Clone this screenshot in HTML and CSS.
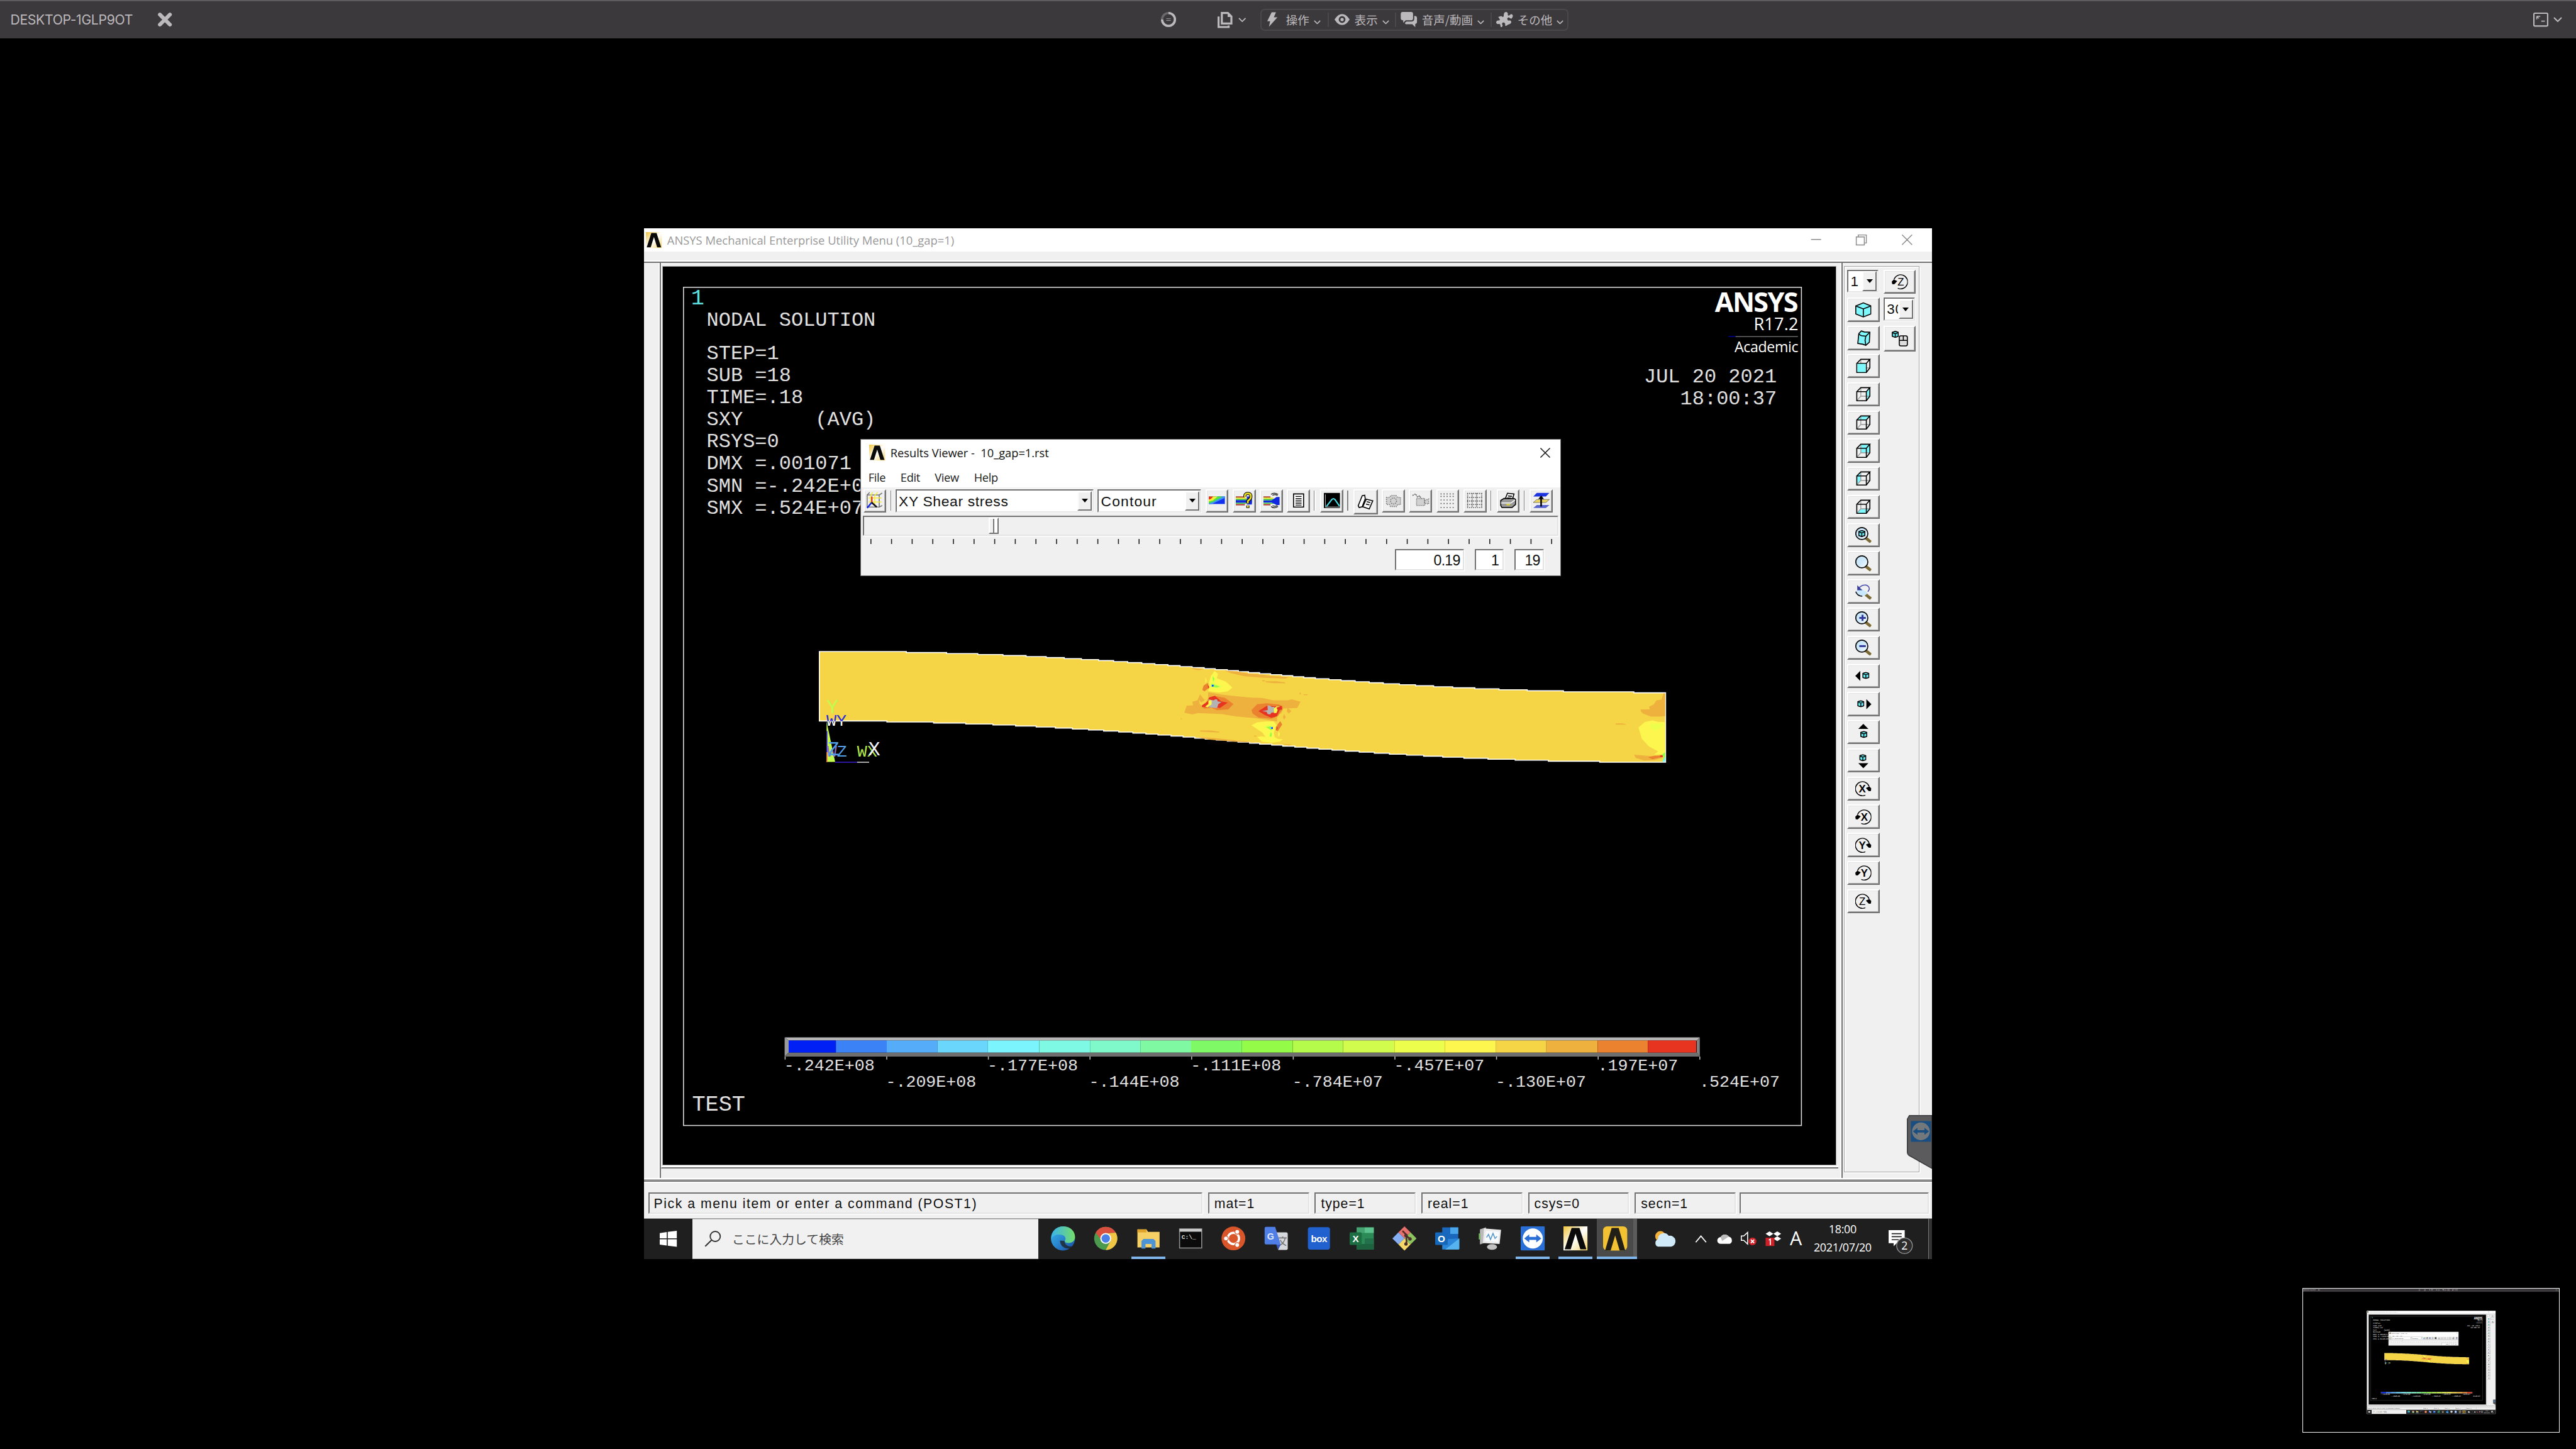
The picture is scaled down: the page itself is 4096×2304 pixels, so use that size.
FILE: index.html
```html
<!DOCTYPE html>
<html lang="ja">
<head>
<meta charset="utf-8">
<title>DESKTOP-1GLP9OT</title>
<link rel="stylesheet" href="styles.css">
</head>
<body>
<svg class="sprite" aria-hidden="true">
  <defs>
    <linearGradient id="g-edge" x1="0" y1="0" x2="1" y2="1"><stop offset="0" stop-color="#35b8e8"/><stop offset=".5" stop-color="#2a86d0"/><stop offset="1" stop-color="#17489c"/></linearGradient>
    <linearGradient id="g-edge2" x1="0" y1="0" x2="1" y2="0"><stop offset="0" stop-color="#3cb4ea"/><stop offset="1" stop-color="#74dd6a"/></linearGradient>
    <linearGradient id="g-lens" x1="0" y1="0" x2="1" y2="1"><stop offset="0" stop-color="#c0e2f8"/><stop offset=".5" stop-color="#cfeafc"/><stop offset="1" stop-color="#fff"/></linearGradient>
    <linearGradient id="g-gold" x1="0" y1="0" x2="1" y2="1"><stop offset="0" stop-color="#f0c53c"/><stop offset=".5" stop-color="#fff"/><stop offset="1" stop-color="#f3d264"/></linearGradient>
    <linearGradient id="g-wy" gradientUnits="userSpaceOnUse" x1="0" y1="482" x2="0" y2="495"><stop offset=".58" stop-color="#2b2bd8"/><stop offset=".59" stop-color="#fff"/></linearGradient>
  </defs>
  <symbol id="ansys" viewBox="0 0 16 16"><rect width="16" height="16" fill="url(#g-gold)"/><path d="M.8 15.2 5.4 1h5.2l4.6 14.2h-4L8 4.8 4.8 15.2z" fill="#0a0a0a"/></symbol>
  <symbol id="cube" viewBox="0 0 16 16"><path d="M.5 4 8 1l7.500 3v8L8 15 .5 12z" fill="#7ef7fd" stroke="#000"/><path d="M.5 4 8 7l7.500-3M8 7v8" fill="none" stroke="#000"/></symbol>
  <symbol id="cube-tilt" viewBox="0 0 16 16"><path d="M3.500 3.500 6 .8l3 1 5.500.2-.5 10-3.500 3-3-1-5-.8z" fill="#7ef7fd" stroke="#000"/><path d="M3.500 4 6 5.500l4.500.5L14 2.500M10.500 6l-.8 4 .8 5" fill="none" stroke="#000"/></symbol>
  <symbol id="wire" viewBox="0 0 16 16"><path d="M5.500 1.500v8.500h9M5.500 10 1.500 14.500" fill="none" stroke="#999" stroke-width=".8"/><path d="M1.500 5.500h9.500v9H1.500zM1.500 5.500l4-4h9l-3.500 4M14.500 1.500V10L11 14.500" fill="none" stroke="#000"/></symbol>
  <symbol id="lens" viewBox="0 0 16 16"><path d="M10 10.500 15.500 15" stroke="#7d6b35" stroke-width="3"/><circle cx="6.500" cy="6.500" r="6" fill="url(#g-lens)" stroke="#111" stroke-width="1.100"/></symbol>
  <symbol id="cubelet" viewBox="0 0 7 7"><path d="M.5 1.500 3.500.5l3 1v4l-3 1-3-1z" fill="#5fe9f0" stroke="#000"/><path d="M1 2.200l2.500.6 2.500-.6M3.500 3v3.500" stroke="#000" stroke-width=".9" fill="none"/></symbol>
  <symbol id="cw" viewBox="0 0 16 16"><path d="M10 14.600A7 7 0 1 1 13.800 6" fill="none" stroke="#000" stroke-width=".9"/><path d="M10.500 7.500 14 6l2 2-.5 2.500-2 .2z"/></symbol>
  <symbol id="ccw" viewBox="0 0 16 16"><path d="M6 14.600A7 7 0 1 0 2.200 6" fill="none" stroke="#000" stroke-width=".9"/><path d="M5.500 7.500 2 6 0 8l.5 2.500 2 .2z"/></symbol>
  <symbol id="chev" viewBox="0 0 14 8"><path d="M1 1l6 6 6-6" fill="none" stroke="currentColor" stroke-width="2"/></symbol>
  <symbol id="tv" viewBox="0 0 24 24"><rect width="24" height="24" rx="1" fill="#2a6fd6"/><circle cx="12" cy="12" r="10" fill="#fff"/><path d="M3.500 12l5-4v2.500h7V8l5 4-5 4v-2.500h-7V16z" fill="#2a6fd6"/></symbol>
</svg>

<div class="session">
  <header class="topbar">
    <span class="host">DESKTOP-1GLP9OT</span>
    <svg class="host-close" viewBox="0 0 28 28"><path d="M4 4l20 20M24 4 4 24" stroke="currentColor" stroke-width="7.500" stroke-linecap="round"/></svg>
    <div class="center">
      <svg class="spin" viewBox="0 0 30 30"><circle cx="15" cy="15" r="12.800" fill="none" stroke="#6b686b" stroke-width="4.500"/><path d="M15 2.200A12.800 12.800 0 1 1 2.200 15" fill="none" stroke="currentColor" stroke-width="4.500"/><path d="M10.500 13.500h9M10.500 17h9" stroke="currentColor" stroke-width="1"/></svg>
      <svg class="doc" viewBox="0 0 30 32"><path d="M8.500 2h12l7 7v14h-19z" fill="none" stroke="currentColor" stroke-width="4"/><path d="M20 1v9h8z" fill="currentColor"/><path d="M2 9v21h20v-3" fill="none" stroke="currentColor" stroke-width="4"/></svg>
      <svg class="chev chev-doc"><use href="#chev"/></svg>
      <nav class="menu">
        <div class="mi m1"><svg class="ic" viewBox="0 0 22 30"><path d="M9 0h9l-4.500 10.500H21L3.500 30 6 18.500H0z" fill="currentColor"/></svg><span>操作</span><svg class="chev"><use href="#chev"/></svg></div>
        <div class="mi m2"><svg class="ic" viewBox="0 0 32 24"><path d="M0 12C6 3 10 .5 16 .5S26 3 32 12c-6 9-10 11.500-16 11.500S6 21 0 12z" fill="currentColor"/><circle cx="16" cy="12" r="7.200" fill="#3c393c"/><circle cx="16" cy="12" r="3.500" fill="currentColor"/></svg><span>表示</span><svg class="chev"><use href="#chev"/></svg></div>
        <div class="mi m3"><svg class="ic" viewBox="0 0 33 32"><path d="M4 0h17q4 0 4 4v9q0 4-4 4H10l-5 5v-5.200Q0 17 0 13V4q0-4 4-4z" fill="currentColor"/><path d="M27.500 8Q33 8 33 12v8q0 4-3.500 4v7l-6-6H12q-3.500 0-3.500-3l3-2.500h10q6 0 6-6z" fill="currentColor"/></svg><span>音声/動画</span><svg class="chev"><use href="#chev"/></svg></div>
        <div class="mi m4"><svg class="ic" viewBox="0 0 33 30"><path d="M4 10l6-2 3 2q3-1 2-3 0-7 5-7 4 1 3 5 0 3 3 2l4-3q4 2 3 5l-2 4q-4 1-5-2-4-1-4 3 1 4 4 3 4-1 4 4-1 3-6 4l-5 3q-2-1-1-4-1-4-4-3-3 1-2 4 2 3-1 5H9l-1-5q-1-2-4-1-4 0-4-4 1-4 5-3 3 0 2-3z" fill="currentColor"/></svg><span>その他</span><svg class="chev"><use href="#chev"/></svg></div>
      </nav>
    </div>
    <svg class="winmode" viewBox="0 0 30 28"><rect x="1.300" y="1.300" width="27.400" height="25.400" rx="2" fill="none" stroke="currentColor" stroke-width="2.600"/><path d="M7 7.500h7M7 7.500v6M7 7.500l4 4M16 17h7" fill="none" stroke="currentColor" stroke-width="2"/></svg>
    <svg class="chev chev-end"><use href="#chev"/></svg>
  </header>

  <main class="stage">
    <div class="desktop">
      <div class="titlebar">
        <svg class="app-icon"><use href="#ansys"/></svg>
        <span class="app-title">ANSYS Mechanical Enterprise Utility Menu (10_gap=1)</span>
        <svg class="winbtns" viewBox="0 0 104 12"><path d="M1 5.500h10M46 3h8v8h-8zM48 3V1h8v8h-2M91.500.800l10 10M101.500.800l-10 10" fill="none" stroke="#8a8a8a" stroke-width=".9"/></svg>
      </div>
      <div class="strip"></div>
      <div class="work">
        <div class="gutter"></div>
        <div class="mid">
          <div class="view">
            <svg class="plot" viewBox="19 38 1166 892">
              <rect x="39.500" y="58.500" width="1111" height="833" fill="none" stroke="#d8d8d8"/>
              <text x="47" y="75.600" class="t22 cyan">1</text>
              <g class="t20">
                <text x="62.500" y="96.600">NODAL SOLUTION</text>
                <text x="62.500" y="129.800">STEP=1</text>
                <text x="62.500" y="151.800">SUB =18</text>
                <text x="62.500" y="173.700">TIME=.18</text>
                <text x="62.500" y="195.600">SXY      (AVG)</text>
                <text x="62.500" y="217.600">RSYS=0</text>
                <text x="62.500" y="239.500">DMX =.001071</text>
                <text x="62.500" y="261.700">SMN =-.242E+08</text>
                <text x="62.500" y="283.600">SMX =.524E+07</text>
                <text x="994" y="153">JUL 20 2021</text>
                <text x="1030" y="175">18:00:37</text>
              </g>
              <g class="brand">
                <text x="1064.500" y="82.700" class="b1" textLength="83">ANSYS</text>
                <text x="1103" y="101.300" class="b2" textLength="44.500">R17.2</text>
                <path d="M1078 107.500h7" stroke="#00008c"/><path d="M1085 107.500h62" stroke="#666"/>
                <text x="1084" y="123.200" class="b3" textLength="63.500">Academic</text>
              </g>

              <path d="M174.500 420.500H261v1H301v1H332v1H357v1H380v1H400v1H418v1H435v1H452v1H467v1H481v1H495v1H508v1H521v1H533v1H545v1H557v1H568v1H580v1H591v1H601v1H612v1H623v1H634v1H645v1H656v1H667.500v1H681v1H693v1H707v1H721v1H735v1H751v1H767v1H785v1H804v1H826v1H850v1H878v1H914v1H984v1H1015.500V530.500H950v-1H899v-1H866v-1H839v-1H815v-1H794v-1H775v-1H758v-1H741v-1H726v-1H711v-1H697v-1H684v-1H671v-1H659v-1H647v-1H635v-1H624v-1H612v-1H602v-1H590.500v-1H580v-1H569v-1H558v-1H547.500v-1H536v-1H524v-1H511v-1H499v-1H486v-1H472v-1H457v-1H442v-1H426v-1H409v-1H390v-1H369.500v-1H347v-1H320v-1H288v-1H241.600v-1H174.500z" fill="#f5d446" stroke="#fff"/>
              <!-- contour bands around the two holes -->
              <g transform="translate(160 408) scale(.31888 .16667)">
                <g fill="#efb13e">
                  <path d="M1308 188l42 6 33 12 40 6 30 8 32 4 25 3-12 9-68-4-60-10-40-18z"/>
                  <path d="M1202 172l43 7-17 8-15-6zM1426 246h8v6h-8zM1436 252h34l27 7v5l-35-1-26-5zM1172 472l4 6-4 4zM1542 322h4v8h-4zM1555 330h12v5h-12zM1232 546h34l26 7v5l-34-3-26-3z"/>
                  <path d="M1257 318L1300 332 1340 340 1390 350 1425 352 1460 366 1505 366 1518 360 1545 374 1535 412 1492 414 1486 440 1472 458 1472 492 1440 482 1400 472 1345 462 1300 448 1225 442 1208 450 1183 440 1190 398 1210 396 1208 374 1224 366 1232 330 1245 362 1257 358z"/>
                  <path d="M1505 412l12 18-9 14-6-14zM1494 448l5 18-5 16-4-16zM1215 584l65 8 60 12 66 14-66-6-80-12zM1485 624l36 6-12 6zM1400 575l10 4-8 4z"/>
                </g>
                <path d="M1228 362l8 18 14-20 7 2v20l-16 22-10-16z" fill="#f5d446"/>
                <g fill="#eb822f">
                  <path d="M1262 345l18-5 30 12 26 36-16 32-35 5-18-14-22 4-8-16 10-12 8-20zM1392 425l18-36 30-6 38 8 12 10-2 20-14 40-20 14-40-6-18-24zM1256 262l4 28-14 22-7-8 4-26zM1482 490l6 20-14 40-6-6 6-36z"/>
                </g>
                <path d="M1260 350l18-12 20 34 20 8-24 32-24-6h-32v-10l18-24zM1414 430l26-32 32 4 14-2 2 20-8 4-8 34-6 6-12 6-20-16zM1256 274l5 14-4 8zM1470 518l4 14-4 12z" fill="#e63420"/>
                <path d="M1255 358l12 6 8 2 4-6h6l2 12 12 4-10 12-4 24-26-4 8-22-4-18zM1442 396l8 2 6 8 8-2-2 34-8 2-3 10-8-2-4-14-14-4 18-6z" fill="#b3b3b3"/>
                <path d="M1258 366h10v24l-12 18-8-6 10-14zM1482 402l-12 8 4 14-4 18h-8v-28l8-12z" fill="#fdf64e"/>
                <path d="M1277 190l11 18-4 26 28 20 21 36-15 22-28 8-33-10 5-26-2-26 6-38zM1248 228l5 20-4 18zM1392 515l18-18 30-6 22 1 8 20-8 48 2 24 10 12 16 2-10 14-25 8-30-8-15-28 14-4 12 4-10-26z" fill="#fdf64e"/>
                <path d="M1272 215l8 22-2 26 26 18-12 12-28-2zM1424 525l26-20 8 20-2 60h-10l4-44z" fill="#ecfd4c"/>
                <path d="M1271 222l6 16-4 16zM1268 266l8 6 18 12-10 6-18-6zM1438 526l14-6 6 18-4 6zM1452 555l4 10-2 20-5-6z" fill="#94fc49"/>
                <path d="M1268 272h7v12h-7zM1452 524h7v12h-7z" fill="#6bd6fb"/>
                <path d="M1269 275h5v8h-5zM1454 527h5v8h-5z" fill="#0020f5"/>
                <path d="M1476 552l5 12-3 20-3-10z" fill="#fdf64e"/>
              </g>
              <!-- bands at the clamped end -->
              <g transform="translate(510 418) scale(.33163 .16667)">
                <path d="M1523 264v136l-20 3h-22l-24-18-7-14v-11h27l-2-16 14-14 8-24 15-4 6-38zM1375 443h20l11 5v3h-31zM1430 630l50 8 34-6v18l-24 12-30 3-25-15z" fill="#efb13e"/>
                <path d="M1443 468l19-33 23-9 16 8 22 2v190l-33 4 12-20-28-30-21-45z" fill="#fdf64e"/>
                <path d="M1480 445h42l-12 24-14 18-18-16z" fill="#ecfd4c"/>
                <path d="M1472 645l20-8h24l-8 10-24 10z" fill="#eb822f"/>
                <path d="M1508 634h8v10h-8z" fill="#e63420"/>
                <path d="M1523 615v56h-8l4-30-6-10z" fill="#94fc49"/><path d="M1523 640v32h-9z" fill="#7bf4fd"/>
              </g>
              <!-- global and working-plane triads -->
              <path d="M181.700 490 190.200 530.200h-8.500z" fill="#c2fb4d"/>
              <path d="M182 499.500v21" stroke="#3c1ed2"/><path d="M182 520.500v10" stroke="#eb6a2f"/>
              <path d="M190 530.500h22" stroke="#3c1ed2"/><path d="M212 530.500h12" stroke="#d0d0d0"/>
              <g class="triad">
                <text x="181.500" y="481.800" class="big-letter lime">Y</text>
                <text x="181.500" y="494" class="wy">WY</text>
                <text x="182" y="524.700"><tspan class="violet">W</tspan><tspan class="sky">Z</tspan></text>
                <text x="182.500" y="523.500" class="big-letter sky">Z</text>
                <text x="212" y="524.700" class="lime2">WX</text>
                <text x="223" y="523.800" class="big-letter pale">X</text>
              </g>

              <!-- colour legend -->
              <path d="M140 804h909.500l-3 3H144z" fill="#b4b4b4"/><path d="M140 804l4 3v12l-4 4z" fill="#9a9a9a"/><path d="M140 823l4-4h902.500l3 4z" fill="#6e6e6e"/><path d="M1049.500 804l-3 3v12l3 4z" fill="#808080"/>
              <g>
                <rect x="144" y="807" width="47" height="12" fill="#0020f5"/><rect x="191" y="807" width="50.500" height="12" fill="#3b82f7"/><rect x="241.500" y="807" width="50.500" height="12" fill="#55adf9"/><rect x="292" y="807" width="50" height="12" fill="#6bd6fb"/><rect x="342" y="807" width="51" height="12" fill="#7bf4fd"/><rect x="393" y="807" width="50.500" height="12" fill="#7df9e4"/><rect x="443.500" y="807" width="50" height="12" fill="#7ff9c9"/><rect x="493.500" y="807" width="50.500" height="12" fill="#7ff9a2"/><rect x="544" y="807" width="50.500" height="12" fill="#7ffa66"/><rect x="594.500" y="807" width="50.500" height="12" fill="#94fc49"/><rect x="645" y="807" width="50" height="12" fill="#b5fb4c"/><rect x="695" y="807" width="51" height="12" fill="#d2fc4d"/><rect x="746" y="807" width="50" height="12" fill="#ecfd4c"/><rect x="796" y="807" width="51" height="12" fill="#fdf64e"/><rect x="847" y="807" width="50" height="12" fill="#f5d446"/><rect x="897" y="807" width="51" height="12" fill="#efb13e"/><rect x="948" y="807" width="50" height="12" fill="#eb822f"/><rect x="998" y="807" width="48" height="12" fill="#e63420"/>
              </g>
              <path d="M140.500 823v3M241.500 823v3M342.500 823v3M443.500 823v3M544.500 823v3M645.500 823v3M746.500 823v3M847.500 823v3M948.500 823v3M1049.500 823v3" stroke="#bbb"/>
              <g class="t17">
                <text x="139.500" y="837">-.242E+08</text><text x="240.500" y="853">-.209E+08</text><text x="341.500" y="837">-.177E+08</text><text x="442.500" y="853">-.144E+08</text><text x="543.500" y="837">-.111E+08</text><text x="644.500" y="853">-.784E+07</text><text x="745.500" y="837">-.457E+07</text><text x="846.500" y="853">-.130E+07</text><text x="948" y="837">.197E+07</text><text x="1049" y="853">.524E+07</text>
              </g>
              <text x="48" y="876.800" class="t22">TEST</text>
            </svg>
          </div>
        </div>
        <aside class="side">
          <div class="tools">
            <div class="col">
              <div class="combo tcombo"><span>1</span><i class="drop"></i></div>
              <button class="tb"><svg><use href="#cube"/></svg></button>
              <button class="tb"><svg><use href="#cube-tilt"/></svg></button>
              <button class="tb"><svg viewBox="0 0 16 16"><path d="M1.500 5.500H11v9H1.500z" fill="#7ef7fd"/><use href="#wire" width="16" height="16"/><path d="M2 6h8.500v8H2z" fill="#7ef7fd"/></svg></button>
              <button class="tb"><svg viewBox="0 0 16 16"><path d="M11 5.500l3.500-4V10L11 14.500z" fill="#7ef7fd"/><use href="#wire" width="16" height="16"/></svg></button>
              <button class="tb"><svg viewBox="0 0 16 16"><path d="M1.500 5.500l4-4h9l-3.500 4z" fill="#7ef7fd"/><use href="#wire" width="16" height="16"/></svg></button>
              <button class="tb"><svg viewBox="0 0 16 16"><path d="M5.500 1.500h9V10h-9z" fill="#7ef7fd"/><use href="#wire" width="16" height="16"/></svg></button>
              <button class="tb"><svg viewBox="0 0 16 16"><path d="M1.500 5.500l4-4V10l-4 4.500z" fill="#7ef7fd"/><use href="#wire" width="16" height="16"/></svg></button>
              <button class="tb"><svg viewBox="0 0 16 16"><path d="M1.500 14.500l4-4.500h9L11 14.500z" fill="#7ef7fd"/><use href="#wire" width="16" height="16"/></svg></button>
              <button class="tb"><svg viewBox="0 0 16 16"><use href="#lens" width="16" height="16"/><use href="#cubelet" x="3" y="3" width="7" height="7"/></svg></button>
              <button class="tb"><svg><use href="#lens"/></svg></button>
              <button class="tb"><svg viewBox="0 0 16 16"><path d="M10 10.500 15.500 15" stroke="#7d6b35" stroke-width="3"/><path d="M.5 7Q2 12 6.500 12.500 11 12 12 9L6 5z" fill="#c9e8fb"/><path d="M.5 8Q2 12.500 7 12.500" fill="none" stroke="#111"/><path d="M2 1.500 7 6.500H2z" fill="#3a3f9c"/><path d="M4 4Q7 .8 11 1.500q3 1 3 4L12.500 8" fill="none" stroke="#4a50b0"/></svg></button>
              <button class="tb"><svg viewBox="0 0 16 16"><use href="#lens" width="16" height="16"/><path d="M4 6.500h6.500M7.200 3.500v6" stroke="#343a9c" stroke-width="1.900"/></svg></button>
              <button class="tb"><svg viewBox="0 0 16 16"><use href="#lens" width="16" height="16"/><path d="M4 6.500h6.500" stroke="#343a9c" stroke-width="1.900"/></svg></button>
              <button class="tb"><svg viewBox="0 0 16 16"><path d="M0 8l5-5v10z"/><use href="#cubelet" x="7" y="4" width="7" height="7"/></svg></button>
              <button class="tb"><svg viewBox="0 0 16 16"><path d="M16 8l-5-5v10z"/><use href="#cubelet" x="2" y="4" width="7" height="7"/></svg></button>
              <button class="tb"><svg viewBox="0 0 16 16"><path d="M8 0l5 5H3z"/><use href="#cubelet" x="5" y="7" width="7" height="7"/></svg></button>
              <button class="tb"><svg viewBox="0 0 16 16"><path d="M8 16l5-5H3z"/><use href="#cubelet" x="4" y="2" width="7" height="7"/></svg></button>
              <button class="tb"><svg viewBox="0 0 16 16"><use href="#cw" width="16" height="16"/><text x="7" y="12" class="ax">X</text></svg></button>
              <button class="tb"><svg viewBox="0 0 16 16"><use href="#ccw" width="16" height="16"/><text x="9" y="12" class="ax">X</text></svg></button>
              <button class="tb"><svg viewBox="0 0 16 16"><use href="#cw" width="16" height="16"/><text x="7" y="12" class="ax">Y</text></svg></button>
              <button class="tb"><svg viewBox="0 0 16 16"><use href="#ccw" width="16" height="16"/><text x="9" y="12" class="ax">Y</text></svg></button>
              <button class="tb"><svg viewBox="0 0 16 16"><use href="#cw" width="16" height="16"/><text x="7" y="12" class="ax thin">Z</text></svg></button>
            </div>
            <div class="col">
              <button class="tb"><svg viewBox="0 0 16 16"><use href="#ccw" width="16" height="16"/><text x="9" y="12" class="ax thin">Z</text></svg></button>
              <div class="combo tcombo"><span class="cut">30</span><i class="drop"></i></div>
              <button class="tb tall"><svg viewBox="0 0 16 16"><use href="#cubelet" width="7" height="7"/><rect x="7.500" y="5" width="8" height="10" rx="1.500" fill="#ddd" stroke="#000"/><path d="M7.500 9.500h8M11.500 5v4.500" stroke="#000"/></svg></button>
            </div>
          </div>
        </aside>
      </div>
      <div class="status">
        <div class="cell c0">Pick a menu item or enter a command (POST1)</div>
        <div class="cell">mat=1</div>
        <div class="cell">type=1</div>
        <div class="cell">real=1</div>
        <div class="cell">csys=0</div>
        <div class="cell">secn=1</div>
        <div class="cell last"></div>
      </div>
      <div class="taskbar">
        <div class="start"><svg viewBox="0 0 17 16"><path d="M0 2.300 7 1.300v6.200H0zM8 1.100 17 0v7.500H8zM0 8.500h7v6.200l-7-1zM8 8.500h9V16l-9-1.200z" fill="#fff"/></svg></div>
        <div class="search"><svg viewBox="0 0 17 16"><circle cx="10.800" cy="5.600" r="5" fill="none" stroke="#333" stroke-width="1.200"/><path d="M7.200 9.200.8 15.400" stroke="#333" stroke-width="1.300"/></svg><span>ここに入力して検索</span></div>
        <div class="apps">
          <div class="app"><svg viewBox="0 0 24 24"><circle cx="12" cy="12" r="12" fill="url(#g-edge)"/><path d="M.5 10C2 3 7 0 12.500 0 20 0 24 5.500 24 10.500c0 4-3 6-6.500 6-3 0-4-1.200-3.500-2.300 1-1.500.8-4.700-3-5.700C7 7.500 3 8.500.5 12z" fill="url(#g-edge2)"/><path d="M9 14c0 5 4 8 8.500 8 2 0 4-1 5-2.500-3 1-8.500.5-9-5z" fill="#1f1f1f" opacity=".75"/></svg></div>
          <div class="app"><svg viewBox="0 0 24 24"><circle cx="12" cy="12" r="11.500" fill="#4b9a4e"/><path d="M2 6.300A11.500 11.500 0 0 1 22 6.300L12 7 8 14z" fill="#d9503f"/><path d="M22 6.300A11.500 11.500 0 0 1 12 23.500L17 14l-3-7z" fill="#f1c644"/><circle cx="12" cy="12" r="5.400" fill="#fff"/><circle cx="12" cy="12" r="4.200" fill="#4a80e8"/></svg></div>
          <div class="app on"><svg viewBox="0 0 24 24"><path d="M1 3h9l1.500 2.500H23V21H1z" fill="#f6d064"/><path d="M1 3h9v3H1z" fill="#dfa32a"/><path d="M5 22v-7.500l2-2h10l2 2V22h-4v-4.500H9V22z" fill="#4c94d6"/></svg></div>
          <div class="app"><svg viewBox="0 0 24 24"><rect x="1" y="2.500" width="22" height="19" fill="#0b0b0b" stroke="#8e8e8e"/><path d="M1 2.500h22v2.800H1z" fill="#c9c9c9"/><text x="3" y="12.500" class="cmd">C:\_</text></svg></div>
          <div class="app"><svg viewBox="0 0 24 24"><circle cx="12" cy="12" r="11.800" fill="#d9562a"/><circle cx="12" cy="12" r="5.600" fill="none" stroke="#fff" stroke-width="2.200"/><g fill="#fff" stroke="#d9562a" stroke-width=".8"><circle cx="4.600" cy="12" r="2.300"/><circle cx="15.800" cy="5.500" r="2.300"/><circle cx="15.800" cy="18.500" r="2.300"/></g></svg></div>
          <div class="app"><svg viewBox="0 0 24 24"><path d="M9 6h13a1.500 1.500 0 0 1 1.500 1.500V22a1.500 1.500 0 0 1-1.500 1.500H14z" fill="#d5d8dc"/><path d="M14.500 11.500h8M18.500 10v1.500M21 11.500q-1 5-5.500 7.500M16 13.500q2 4 6 5.500" fill="none" stroke="#777" stroke-width="1"/><path d="M2 .5h9L16.500 18H2A1.500 1.500 0 0 1 .5 16.500V2A1.500 1.500 0 0 1 2 .5z" fill="#4f7fe6"/><path d="M12 18h4.500L14 23.500z" fill="#3557b8"/><text x="3" y="13" class="gt">G</text></svg></div>
          <div class="app"><svg viewBox="0 0 24 24"><rect x="1" y=".8" width="22" height="22.400" rx="2.500" fill="#2160cf"/><text x="12" y="15.500" class="box">box</text></svg></div>
          <div class="app"><svg viewBox="0 0 24 24"><path d="M7 1h17v22H7z" fill="#2c8a57"/><path d="M15 1h9v5.500h-9z" fill="#5cc28d"/><path d="M7 1h8v5.500H7z" fill="#45a372"/><path d="M15 12h9v5.500h-9z" fill="#23714a"/><path d="M7 17.500h17V23H7z" fill="#1e6340"/><rect y="6" width="12" height="12.500" rx="1" fill="#1d6e43"/><text x="6" y="15.800" class="off">X</text></svg></div>
          <div class="app"><svg viewBox="0 0 24 24"><path d="M12 0l6 6-6 6-6-6z" fill="#e8706b"/><path d="M0 12l6-6 6 6-6 6z" fill="#86aef2"/><path d="M12 12l6-6 6 6-6 6z" fill="#8ec460"/><path d="M12 12l6 6-6 6-6-6z" fill="#f4d768"/><path d="M10 4.500l4 4V18M13.500 9l4 3.500" fill="none" stroke="#4a2f2a" stroke-width="1.600"/><circle cx="13.500" cy="9" r="1.700" fill="#4a2f2a"/><circle cx="17.500" cy="12.500" r="1.700" fill="#4a2f2a"/><circle cx="13.500" cy="17.500" r="1.700" fill="#4a2f2a"/></svg></div>
          <div class="app"><svg viewBox="0 0 24 24"><path d="M7 1h16v13H7z" fill="#1a68bd"/><path d="M15 1h8v6.500h-8z" fill="#4aa6ea"/><path d="M7 13l17-1v10a1 1 0 0 1-1 1H7z" fill="#2b86d9"/><path d="M24 12L10 23h13a1 1 0 0 0 1-1z" fill="#57b3ef"/><rect y="6" width="12.500" height="12.500" rx="1" fill="#1767bb"/><text x="6.200" y="15.800" class="off">O</text></svg></div>
          <div class="app"><svg viewBox="0 0 24 24"><path d="M2 3l6-2v15l-6 2z" fill="#b9b9b9"/><path d="M6 2l17 1.500-1.500 14L5 16.500z" fill="#ececec"/><path d="M8 4.500l13 1-1 10-13-1z" fill="#f8fbfd"/><path d="M8.500 11l2-3 2 5 2.500-6 2 5 2-2" fill="none" stroke="#5a97c9"/><path d="M1.500 7v6" stroke="#6cc24a" stroke-width="1.300"/><ellipse cx="14" cy="20.500" rx="5" ry="2.800" fill="#c2c2c2"/></svg></div>
          <div class="app on"><svg><use href="#tv"/></svg></div>
          <div class="app on"><svg><use href="#ansys"/></svg></div>
          <div class="app on active"><svg viewBox="0 0 24 24"><rect width="24" height="24" rx="4" fill="#f3c233"/><path d="M2 24 8.500 1.500h7L22 24h-5.500L12 9 7.500 24z" fill="#221f17"/></svg></div>
        </div>
        <div class="tray">
          <svg class="wx" viewBox="0 0 21 16"><circle cx="6.500" cy="5.500" r="5.300" fill="#f2b23c"/><path d="M4 16a4 4 0 0 1 0-7.500A6 6 0 0 1 15 5a5.600 5.600 0 0 1 2.500 11z" fill="#cfe9f8"/></svg>
          <svg class="up" viewBox="0 0 12 8"><path d="M.5 7.500 6 1l5.500 6.500" fill="none" stroke="#fff" stroke-width="1.200"/></svg>
          <svg class="cl" viewBox="0 0 16 11"><path d="M3.500 11a3.500 3.500 0 0 1 0-7A5 5 0 0 1 12 3.500 4 4 0 0 1 13 11z" fill="#fff"/><path d="M3.500 4A5 5 0 0 1 12 3.500L5 8z" fill="#bbb"/></svg>
          <svg class="sp" viewBox="0 0 16 14"><path d="M.5 4.500H3L7 .8v12L3 9H.5z" fill="none" stroke="#fff"/><circle cx="12" cy="10" r="4" fill="#d2232a"/><path d="M10.300 8.300l3.400 3.400M13.700 8.300l-3.400 3.400" stroke="#fff" stroke-width="1.200"/></svg>
          <svg class="db" viewBox="0 0 16 15"><path d="M4 0l4 2.500L4 5 0 2.500zM12 0l4 2.500L12 5 8 2.500zM12 5l4 2.500-4 2.500-4-2.500z" fill="#fff"/><rect y="6.500" width="9" height="8.500" fill="#cf2027"/><path d="M3.300 9l1.500-1v6" fill="none" stroke="#fff" stroke-width="1.100"/></svg>
          <span class="ime">A</span>
          <div class="clock"><span>18:00</span><span>2021/07/20</span></div>
          <svg class="note" viewBox="0 0 25 25"><path d="M0 0h16v13H8l-3 3v-3H0z" fill="#fff"/><path d="M3 3.500h10M3 6.500h10M3 9.500h7" stroke="#222"/><circle cx="15.800" cy="15.500" r="7.800" fill="#2c2c2c" stroke="#999" stroke-width=".8"/><text x="15.800" y="19.300" class="nt">2</text></svg>
          <i class="peek"></i>
        </div>
      </div>

      <!-- floating results viewer -->
      <section class="viewer">
        <div class="v-title"><svg class="app-icon"><use href="#ansys"/></svg><span>Results Viewer -&nbsp; 10_gap=1.rst</span><svg class="v-close" viewBox="0 0 10 10"><path d="M.3.300l9.400 9.400M9.700.300.3 9.700" stroke="#111" stroke-width=".9"/></svg></div>
        <div class="v-menu"><span>File</span><span>Edit</span><span>View</span><span>Help</span></div>
        <div class="v-tools">
          <button class="vb"><svg viewBox="0 0 16 16"><path d="M.5 2.500h12v12H.5zM.5 2.500 3 0M12.500 2.500 15.500.5M12.500 14.500l3-1.500" fill="none" stroke="#777"/><path d="M4 3v9M8 3v9M2 5.500h13M2 9.500h13M6 0 4 3M11 0 8 3" stroke="#f5ee3c"/><path d="M5.200 4v6" stroke="#d92020" stroke-width="1.300"/><path d="M5 10 .5 15.500" stroke="#1528e8" stroke-width="1.600"/><path d="M5 10l5 4.500" stroke="#111" stroke-width="1.600"/></svg></button>
          <i class="sep s1"></i>
          <div class="combo k1"><span>XY Shear stress</span><i class="drop"></i></div>
          <div class="combo k2"><span>Contour</span><i class="drop"></i></div>
          <button class="vb b1"><svg viewBox="0 0 16 16"><path d="M0 4h16v7.500H0z" fill="#1032f0"/><path d="M0 4h16v1.500L3 11.500H0z" fill="#3f93f2"/><path d="M0 4h14L5 9l-5 2z" fill="#4ee63e"/><path d="M0 4h9L4 8 0 9z" fill="#f6ee3a"/><path d="M0 4h4.500L2 6.500 0 7z" fill="#e8301f"/></svg></button>
          <button class="vb"><svg viewBox="0 0 16 16"><path d="M0 4.500h9" stroke="#a8281c"/><path d="M0 5.800h16" stroke="#efe732" stroke-width="1.400"/><path d="M0 7.200h16" stroke="#3cc83c" stroke-width="1.400"/><path d="M0 9h16" stroke="#1028e0" stroke-width="2.600"/><path d="M11 4h5v8h-5z" fill="#1028e0"/><path d="M0 10.800h10" stroke="#3cc83c"/><path d="M0 12.200h9" stroke="#a8281c" stroke-width="1.200"/><path d="M9 4.500Q8.500 1 12 1t3 3.500q0 1.500-3 4v2.500M12 13v2.500" fill="none" stroke="#000" stroke-width="3"/><path d="M9 4.500Q8.500 1 12 1t3 3.500q0 1.500-3 4v2.500M12 13v2" fill="none" stroke="#efe020" stroke-width="1.700"/></svg></button>
          <button class="vb"><svg viewBox="0 0 16 16"><path d="M0 4.500h7" stroke="#a8281c"/><path d="M0 5.800h10" stroke="#efe732" stroke-width="1.400"/><path d="M0 7.200h10" stroke="#3cc83c" stroke-width="1.400"/><path d="M0 10.800h10" stroke="#3cc83c"/><path d="M0 12.200h7" stroke="#a8281c" stroke-width="1.200"/><path d="M0 8h8l5-3.500h3v8h-3L8 10H0z" fill="#1028e0"/><path d="M7.500 2q3-2.500 7 0M9 3q2-1.500 5 0M7.500 14q3 2.500 7 0M9 13q2 1.500 5 0" fill="none" stroke="#333" stroke-width=".9"/></svg></button>
          <button class="vb"><svg viewBox="0 0 16 16"><path d="M3 1.500h10v13H3z" fill="#fff" stroke="#000"/><path d="M5 4h6M5 6.200h6M5 8.400h6M5 10.600h6M5 12.600h6" stroke="#000" stroke-width=".9"/></svg></button>
          <i class="sep s2"></i>
          <button class="vb"><svg viewBox="0 0 16 16"><path d="M0 .5h16v15H0z"/><path d="M1.500 2v12.500H16" fill="none" stroke="#ccc" stroke-width=".6"/><path d="M2.500 14 8 7q1.500-1.500 3 0l4.500 6.500" fill="none" stroke="#46e0e8" stroke-width="1.300"/></svg></button>
          <i class="sep s2"></i>
          <button class="vb big"><svg viewBox="0 0 16 16"><path d="M1 12 5 2l2.500-.5L8 5 5 13l-3 .8z" fill="#fff" stroke="#000"/><path d="M9 5.500 15.500 7 12 15.200 5.500 13z" fill="#fff" stroke="#000"/><path d="M9.500 8l3.500.8M8.700 10.300l3.500.8" stroke="#000"/></svg></button>
          <button class="vb dis"><svg viewBox="0 0 16 16"><path d="M1 5h3l1.500-2h5L12 5h3v7h-3l-1 2H5l-1-2H1z" fill="#999" fill-opacity=".35" stroke="#777" stroke-dasharray="1 1"/><circle cx="8" cy="8.500" r="3" fill="none" stroke="#777" stroke-dasharray="1 1"/></svg></button>
          <button class="vb dis"><svg viewBox="0 0 16 16"><path d="M0 3l3-1.500 2 3 2-1 2 3" fill="none" stroke="#555" stroke-dasharray="1.200 .8"/><path d="M4 6h8v7H4zM12 8l4-1.500v5L12 11z" fill="#999" fill-opacity=".35" stroke="#777" stroke-dasharray="1 1"/></svg></button>
          <button class="vb dis"><svg viewBox="0 0 16 16"><path d="M1 1.500h15M1 4h15M1 7.500h15M1 11h15M1 15h15" fill="none" stroke="#555" stroke-dasharray="1 2"/></svg></button>
          <button class="vb dis"><svg viewBox="0 0 16 16"><path d="M.5 1h15M.5 15h15M.5 5h15M.5 8.500h15M.5 12h15M1 1v14M5.500 1v14M10 1v14M15 1v14" fill="none" stroke="#555" stroke-dasharray="1 1"/></svg></button>
          <i class="sep s2"></i>
          <button class="vb"><svg viewBox="0 0 16 16"><path d="M5 7 7.500.800 14 1.500 12 8" fill="#fff" stroke="#000"/><path d="M8 3.500l4 .3M7.200 5.500l4 .3" stroke="#000"/><path d="M.8 8 4 6h10l1.500 1v5L12 15H2L.8 13z" fill="#999" stroke="#000"/><path d="M1 10.500h10l4-3" fill="none" stroke="#fff"/><path d="M6.500 11.500H10v1.200H6.500z" fill="#e8e020"/></svg></button>
          <i class="sep s2"></i>
          <button class="vb b12"><svg viewBox="0 0 16 16"><path d="M3.500.5H16L12.500 4H0z" fill="#1c35e0"/><path d="M3.500 7H16l-3.500 3H0z" fill="#f0d860" stroke="#444" stroke-width=".4"/><path d="M3.500 12.500H16L12.500 15.500H0z" fill="#5a64d0"/><path d="M7.800 14V5" stroke="#000" stroke-width="1.600"/><path d="M5 6.500l2.800-3.500 2.800 3.500z"/></svg></button>
        </div>
        <div class="slider"><div class="thumb"></div></div>
        <svg class="ticks" viewBox="0 0 678 5"><path d="M0 2.500h678" stroke="#222" stroke-width="5" stroke-dasharray="1 19.500"/></svg>
        <div class="v-fields"><div class="fld f1">0.19</div><div class="fld f2">1</div><div class="fld f3">19</div></div>
      </section>

      <svg class="tvtab" viewBox="0 0 25 53"><path d="M2.500.5H25V53L2 40Q.5 39 .5 37V4z" fill="#5b5b5d" stroke="#3c3c3e"/><path d="M4 6h20v20.500H4z" fill="#1b4e80"/><circle cx="14" cy="16.200" r="8.800" fill="#73787d"/><path d="M6 16.200l4.500-3.500v2.300h7v-2.300l4.500 3.500-4.500 3.500v-2.300h-7v2.300z" fill="#1b4e80"/></svg>
    </div>
  </main>
</div>
<div class="minimap" aria-hidden="true"></div>
<script src="minimap.js"></script>
</body>
</html>
```
FILE: minimap.js
```js
const mini = document.querySelector('.session').cloneNode(true);
mini.classList.add('mini');
document.querySelector('.minimap').appendChild(mini);
```
FILE: styles.css
```css
/* One pixel of the remote desktop is 0.1rem. */
html { font-size: 16px; }
* { box-sizing: border-box; }
body { margin: 0; width: 4096px; height: 2304px; background: #000; overflow: hidden; position: relative; }
svg { display: block; overflow: visible; flex: none; }
button { margin: 0; padding: 0; font: inherit; }
.sprite { position: absolute; width: 0; height: 0; }
.session { width: 4096px; height: 2304px; display: flex; flex-direction: column; background: #000; }

/* ---------- connection toolbar ---------- */
.topbar { height: 60.8px; flex: none; display: flex; align-items: center; background: #3c393c; border-top: 2px solid #5f5c5f; color: #bcb9bc; padding-left: 16.500px; font-family: Inter, "Noto Sans CJK JP", sans-serif; }
.host { font-size: 21.2px; width: 234.500px; white-space: nowrap; letter-spacing: -.35px; }
.host-close { width: 22.400px; height: 22.400px; }
.center { display: flex; align-items: center; margin-left: 1572.500px; }
.spin { width: 24px; height: 24px; }
.doc { width: 24px; height: 25.600px; margin-left: 66px; }
.chev { width: 11px; height: 6.500px; margin-top: 7px; }
.chev-doc { width: 12.500px; height: 7px; margin: 0 0 0 9px; }
.menu { display: flex; align-items: center; height: 35.200px; margin-left: 22.400px; border: 2px solid #4b484b; border-radius: 7px; width: 490px; padding-left: 9.500px; }
.mi { display: flex; align-items: center; height: 22.400px; font-family: "Noto Sans CJK JP", sans-serif; font-size: 18.500px; line-height: 22px; white-space: nowrap; }
.mi + .mi { border-left: 2px solid #4b484b; }
.m1 { width: 96px; } .m2 { width: 107px; padding-left: 8px; } .m3 { width: 152px; padding-left: 7px; } .m4 { padding-left: 7px; }
.m1 .ic { width: 17px; height: 24px; margin-right: 12.500px; }
.m2 .ic { width: 26px; height: 18px; margin-right: 6.500px; }
.m3 .ic { width: 26.400px; height: 25px; margin-right: 7px; }
.m4 .ic { width: 26.400px; height: 24px; margin-right: 7px; }
.mi .chev { margin-left: 7px; }
.winmode { width: 24px; height: 22.400px; margin-left: auto; }
.chev-end { margin: 0 22px 0 8px; width: 14px; height: 8px; }

.stage { flex: 1; display: flex; align-items: center; justify-content: center; }
.desktop { position: relative; width: 128rem; height: 102.400rem; background: #f0f0f0; display: flex; flex-direction: column; overflow: hidden; font-family: "Liberation Sans", Arial, sans-serif; color: #111; }

/* ---------- main window ---------- */
.titlebar { height: 2.3rem; flex: none; background: #fff; display: flex; align-items: center; padding: 0 1.750rem 0 .2rem; }
.app-icon { width: 1.600rem; height: 1.600rem; }
.app-title { margin-left: .5rem; font: 1.150rem "Open Sans", "Noto Sans", sans-serif; color: #999; white-space: nowrap; }
.winbtns { width: 10.400rem; height: 1.200rem; margin-left: auto; }
.strip { height: 1rem; flex: none; border-bottom: .15rem solid #fff; }
.work { height: 91.300rem; flex: none; display: flex; border-top: .13rem solid #727272; }
.gutter { width: 1.700rem; border-right: .13rem solid #727272; box-shadow: inset -.1rem 0 #fff; }
.mid { width: 117.300rem; }
.view { width: 117rem; height: 90rem; border-bottom: .14rem solid #727272; padding: .4rem .2rem .2rem .1rem; border-left: .1rem solid #fff; box-shadow: inset 0 -.15rem #fff; }
.plot { width: 116.600rem; height: 89.200rem; background: #000; outline: .08rem solid #a5a5a5; }
.side { flex: 1; border-left: .13rem solid #727272; padding: .3rem 0 0 .1rem; box-shadow: -.1rem 0 #fff; }
.tools { width: 7.500rem; height: 90.100rem; border: .1rem solid #a5a5a5; box-shadow: inset .1rem .1rem #fff, .1rem .1rem #fff; padding: .3rem; display: flex; gap: .4rem; }
.col { display: flex; flex-direction: column; gap: .4rem; }
.tb { width: 3.200rem; height: 2.400rem; display: flex; align-items: center; justify-content: center; background: #f0f0f0; border: .13rem solid; border-color: #fff #727272 #727272 #fff; box-shadow: inset -.06rem -.06rem #a8a8a8, inset .06rem .06rem #e3e3e3; }
.tb svg { width: 1.600rem; height: 1.600rem; }
.tall { height: 2.550rem; }
.combo { display: flex; background: #fff; border: .13rem solid; border-color: #727272 #e6e6e6 #e6e6e6 #727272; white-space: nowrap; overflow: hidden; outline: .08rem solid #fafafa; }
.combo span { flex: 1; overflow: hidden; }
.drop { flex: none; width: 1.450rem; margin: .05rem; background: #f0f0f0; border: .13rem solid; border-color: #fff #727272 #727272 #fff; display: flex; align-items: center; justify-content: center; }
.drop::before { content: ""; border: .35rem solid transparent; border-top: .4rem solid #000; border-bottom: 0; }
.tcombo { width: 3.100rem; height: 2.300rem; margin-bottom: .1rem; font-size: 1.400rem; line-height: 2.100rem; padding-left: .2rem; }
.tcombo .cut { letter-spacing: .06rem; }
.ax { font: bold 10.500px "Liberation Sans", sans-serif; text-anchor: middle; }
.ax.thin { font-weight: 400; }

/* ---------- plot text ---------- */
.plot text { font-family: "Liberation Mono", "Courier New", monospace; white-space: pre; }
.plot { fill: #e0e0e0; }
.t20 text { font-size: 20px; }
.t22 { font-size: 22px; }
.cyan { fill: #5fe0e0; }
.t17 text, .triad text { font-size: 16.670px; }
.triad text.big-letter { font-size: 20px; }
.lime { fill: #c2fb4d; }
.lime2 { fill: #b5e84c; }
.sky { fill: #4f9fe8; }
.violet { fill: #8b6cc8; }
.pale { fill: #f2f2ff; }
.wy { fill: url(#g-wy); }
.plot .brand text { font-family: "Open Sans", "Noto Sans", sans-serif; fill: #fff; }
.plot .brand .b1 { font-size: 27px; font-weight: 700; }
.plot .brand .b2 { font-size: 17px; }
.plot .brand .b3 { font-size: 14.500px; }

/* ---------- status bar ---------- */
.status { height: 3.800rem; flex: none; display: flex; border-top: .13rem solid #727272; box-shadow: 0 -.12rem #a8a8a8, 0 -.25rem #fff, inset 0 .1rem #fff; padding: 1.100rem .3rem 0 .45rem; gap: .55rem; }
.cell { width: 10.050rem; height: 2.100rem; border: .13rem solid; border-color: #727272 #e3e3e3 #e3e3e3 #727272; box-shadow: .08rem .08rem #fff; padding-left: .5rem; font-size: 1.330rem; line-height: 2.050rem; letter-spacing: .06rem; white-space: nowrap; }
.c0 { width: 55.050rem; letter-spacing: .095rem; padding-left: .4rem; }
.cell.last { flex: 1; margin-left: -.2rem; }

/* ---------- taskbar ---------- */
.taskbar { height: 4rem; flex: none; display: flex; background: #1f1f1f; box-shadow: 0 -.06rem #999; color: #fff; }
.start { width: 4.800rem; display: flex; align-items: center; justify-content: center; }
.start svg { width: 1.700rem; height: 1.600rem; }
.search { width: 34.400rem; background: #f1f1f1; border: .08rem solid #b8b8b8; border-width: .1rem 0; display: flex; align-items: center; padding-left: 1.200rem; color: #444; font: 1.240rem "Noto Sans CJK JP", sans-serif; white-space: nowrap; }
.search svg { width: 1.700rem; height: 1.600rem; margin-right: 1.050rem; }
.apps { display: flex; margin-left: .3rem; }
.app { width: 4.245rem; display: flex; align-items: center; justify-content: center; position: relative; }
.app svg { width: 2.400rem; height: 2.400rem; }
.on::after { content: ""; position: absolute; left: .45rem; right: .45rem; bottom: 0; height: .2rem; background: #7fb5ea; }
.active { background: linear-gradient(90deg, #4a4a4a 3.600rem, #5c5c5c 3.600rem); width: 4rem; }
.active svg { margin-right: .3rem; }
.active::after { left: 0; right: 0; }
.cmd { font: bold 6px "Liberation Mono", monospace; fill: #ddd; }
.gt { font: bold 9px "Liberation Sans", sans-serif; fill: #dfe8fb; }
.box { font: bold 9.500px "Liberation Sans", sans-serif; fill: #fff; text-anchor: middle; letter-spacing: -.3px; }
.off { font: bold 9.500px "Liberation Sans", sans-serif; fill: #fff; text-anchor: middle; }
.nt { font: 11px "Open Sans", sans-serif; fill: #fff; text-anchor: middle; }
.tray { flex: 1; display: flex; align-items: center; padding-left: 1.700rem; }
.wx { width: 2.050rem; height: 1.600rem; margin-right: 2rem; }
.up { width: 1.200rem; height: .75rem; margin-right: 1rem; }
.cl { width: 1.600rem; height: 1.050rem; margin-right: .8rem; }
.sp { width: 1.550rem; height: 1.400rem; margin-right: .85rem; }
.db { width: 1.600rem; height: 1.450rem; margin-right: .85rem; }
.ime { font: 1.900rem/1 "Open Sans", sans-serif; width: 1.200rem; margin-right: .85rem; }
.clock { width: 6.400rem; display: flex; flex-direction: column; align-items: center; gap: .2rem; font: 1.120rem/1.600rem "Open Sans", sans-serif; letter-spacing: -.02rem; white-space: nowrap; }
.note { width: 2.500rem; height: 2.500rem; margin: .8rem 0 0 1.350rem; }
.peek { width: .4rem; align-self: stretch; margin-left: auto; border-left: .08rem solid #777; background: #333; }

/* ---------- results viewer ---------- */
.viewer { position: absolute; left: 21.530rem; top: 20.900rem; width: 69.600rem; height: 13.650rem; background: #f0f0f0; border: .08rem solid #707070; font-family: "Open Sans", "Noto Sans", sans-serif; font-size: 1.140rem; }
.v-title { height: 2.700rem; background: #fff; display: flex; align-items: center; padding: 0 1rem 0 .8rem; color: #111; }
.v-title span { margin-left: .5rem; white-space: nowrap; }
.v-close { width: 1rem; height: 1rem; margin-left: auto; }
.v-menu { height: 2.100rem; background: #fff; display: flex; align-items: center; padding: .1rem 0 0 .7rem; color: #222; letter-spacing: -.02rem; }
.v-menu span:nth-child(1) { width: 3.200rem; } .v-menu span:nth-child(2) { width: 3.400rem; } .v-menu span:nth-child(3) { width: 3.900rem; }
.v-tools { display: flex; align-items: flex-start; height: 2.750rem; padding: .15rem .3rem 0 .2rem; }
.vb { width: 2.300rem; height: 2.300rem; margin-right: .4rem; flex: none; display: flex; align-items: center; justify-content: center; background: #f0f0f0; border: .13rem solid; border-color: #fff #727272 #727272 #fff; box-shadow: inset -.05rem -.05rem #a8a8a8, inset .05rem .05rem #e3e3e3; }
.vb svg { width: 1.600rem; height: 1.600rem; }
.big { width: 2.450rem; height: 2.500rem; }
.sep { width: .15rem; height: 2rem; margin-top: .15rem; flex: none; background: linear-gradient(90deg, #808080 50%, #fff 50%); }
.s1 { margin-right: .35rem; } .s2 { margin-right: .45rem; }
.combo.k1, .combo.k2 { height: 2.300rem; flex: none; font: 1.430rem/2.200rem "Liberation Sans", sans-serif; padding-left: .2rem; }
.k1 { width: 19.700rem; margin-right: .4rem; letter-spacing: .04rem; } .k2 { width: 10.300rem; margin-right: .4rem; letter-spacing: .07rem; }
.b12 { margin-right: 0; }
.slider { height: 2rem; margin: .05rem .2rem 0 .15rem; border: .13rem solid; border-color: #727272 #e3e3e3 #e3e3e3 #727272; box-shadow: .08rem .08rem #fff; padding-left: 12.400rem; }
.thumb { width: 1rem; height: 1.600rem; margin-top: .05rem; border: .13rem solid; border-color: #fff #727272 #727272 #fff; background: linear-gradient(90deg, #f0f0f0 40%, #777 40%, #777 55%, #fff 55%); }
.ticks { width: 67.800rem; height: .5rem; margin: .3rem 0 0 .9rem; }
.v-fields { display: flex; justify-content: flex-end; gap: 1.050rem; padding: .5rem 1.600rem 0 0; }
.fld { height: 2.100rem; background: #fff; border: .13rem solid; border-color: #727272 #e3e3e3 #e3e3e3 #727272; box-shadow: .08rem .08rem #fff; text-align: right; font: 1.450rem/2.100rem "Liberation Sans", sans-serif; letter-spacing: -.05rem; padding-right: .3rem; }
.f1 { width: 6.900rem; } .f2 { width: 2.900rem; padding-right: .4rem; } .f3 { width: 2.950rem; }

.tvtab { position: absolute; right: 0; top: 88.100rem; width: 2.500rem; height: 5.300rem; }

/* ---------- overview ---------- */
.minimap { position: absolute; left: 3660.800px; top: 2048px; width: 409.600px; height: 230.400px; overflow: hidden; }
.minimap::after { content: ""; position: absolute; inset: 0; border: 1px solid #f4f4f4; }
.mini { transform: scale(.1); transform-origin: 0 0; }
```
